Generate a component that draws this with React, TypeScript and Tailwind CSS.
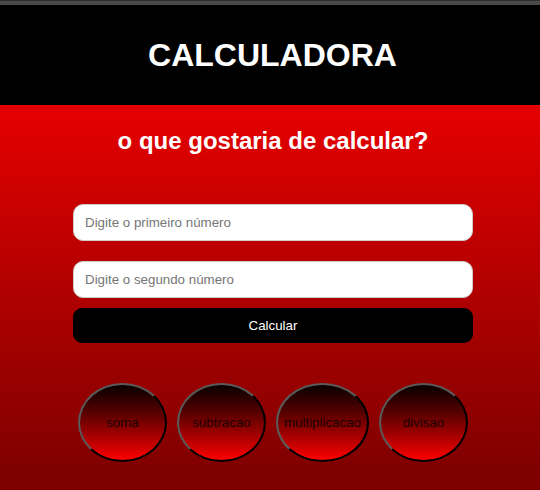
const circleStyles =
  "h-[79px] min-w-[89px] px-[6px] rounded-[50%] border-2 border-t-[#5a5a5a] border-l-[#5a5a5a] border-b-black border-r-black bg-gradient-to-b from-[#0a0000] to-[#ff0000] text-[13.33px] text-[#1a0000] flex items-center justify-center";

const ops = ["soma", "subtracao", "multiplicacao", "divisao"];

function App() {
  return (
    <div
      className="min-h-[490px] bg-[#800000]"
      style={{ fontFamily: '"Liberation Sans", Arial, sans-serif' }}
    >
      <div className="h-[5px] bg-[#4a4a4a] border-t border-[#2e2e2e]" />
      <header className="h-[100px] bg-black flex items-center justify-center pl-[5px]">
        <h1 className="text-[32px] font-bold text-white leading-none">
          CALCULADORA
        </h1>
      </header>
      <main className="bg-gradient-to-b from-[#e60000] to-[#800000] pt-[22px] pb-[8px] pl-[6px]">
        <h2 className="text-[24px] leading-[28px] font-bold text-white text-center">
          o que gostaria de calcular?
        </h2>
        <form
          className="w-[400px] mx-auto mt-[49px] flex flex-col"
          onSubmit={(e) => e.preventDefault()}
        >
          <input
            type="number"
            placeholder="Digite o primeiro número"
            className="h-[37px] w-full rounded-[10px] border border-[#cccccc] bg-white px-[11px] text-[13.33px] text-black placeholder:text-[#757575] outline-none"
          />
          <input
            type="number"
            placeholder="Digite o segundo número"
            className="h-[37px] w-full mt-[20px] rounded-[10px] border border-[#cccccc] bg-white px-[11px] text-[13.33px] text-black placeholder:text-[#757575] outline-none"
          />
          <button
            type="submit"
            className="h-[35px] w-full mt-[10px] rounded-[9px] bg-black text-white text-[13.33px]"
          >
            Calcular
          </button>
          <div className="mt-[40px] flex justify-center gap-[10px]">
            {ops.map((op) => (
              <button key={op} type="button" className={circleStyles}>
                {op}
              </button>
            ))}
          </div>
        </form>
      </main>
    </div>
  );
}

export default App;
